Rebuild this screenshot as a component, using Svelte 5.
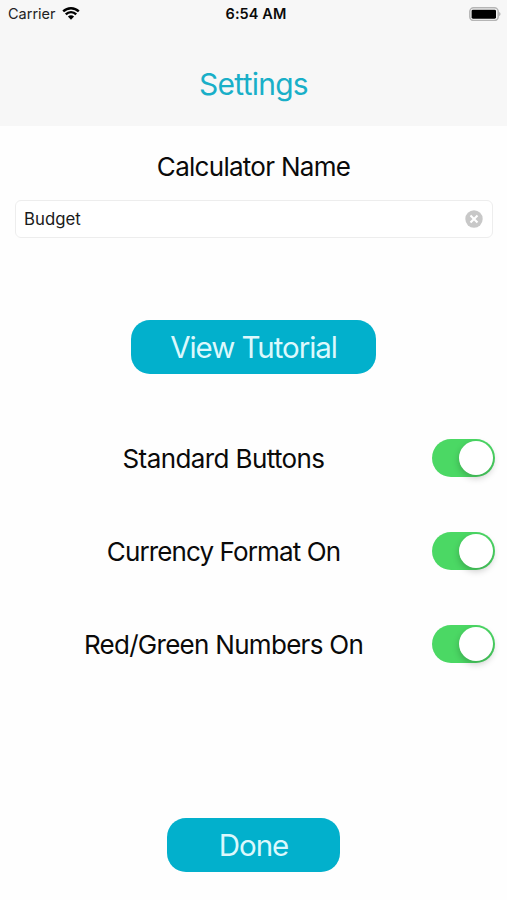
<script lang="ts">
  let calculatorName = $state("Budget");

  let options = $state([
    { id: "standard", label: "Standard Buttons", on: true },
    { id: "currency", label: "Currency Format On", on: true },
    { id: "colors", label: "Red/Green Numbers On", on: true },
  ]);
</script>

<div class="screen">
  <header class="navbar">
    <div class="statusbar">
      <div class="carrier">
        <span>Carrier</span>
        <svg class="wifi" viewBox="0 0 18 13" width="18" height="13" aria-hidden="true">
          <path d="M1.2 4.4a11.2 11.2 0 0 1 15.6 0" />
          <path d="M3.8 7.3a7.3 7.3 0 0 1 10.4 0" />
          <path class="dot" d="M5.9 9.6a4.5 4.5 0 0 1 6.2 0L9 12.7z" />
        </svg>
      </div>
      <span class="time">6:54 AM</span>
      <svg class="battery" viewBox="0 0 33 14" width="33" height="14" aria-hidden="true">
        <rect class="case" x="0.8" y="0.8" width="28.4" height="12.8" rx="3.8" />
        <rect x="2.6" y="2.7" width="24.4" height="9" rx="1.4" />
        <path class="cap" d="M30.3 5c1.5.6 1.5 3.6 0 4.2z" />
      </svg>
    </div>
    <h1>Settings</h1>
  </header>

  <main>
    <label class="name-label" for="calc-name">Calculator Name</label>
    <div class="field">
      <input id="calc-name" type="text" bind:value={calculatorName} />
      <button type="button" class="clear" aria-label="Clear" onclick={() => (calculatorName = "")}>
        <svg viewBox="0 0 18 18" width="18" height="18">
          <circle cx="9" cy="9" r="8.7" />
          <path d="M5.5 5.5l7 7M12.5 5.5l-7 7" />
        </svg>
      </button>
    </div>

    <button type="button" class="action tutorial">View Tutorial</button>

    <div class="options">
      {#each options as option (option.id)}
        <div class="option">
          <span class="option-label {option.id}">{option.label}</span>
          <button
            type="button"
            class="switch"
            class:on={option.on}
            role="switch"
            aria-checked={option.on}
            aria-label={option.label}
            onclick={() => (option.on = !option.on)}
          >
            <span class="knob"></span>
          </button>
        </div>
      {/each}
    </div>

    <button type="button" class="action done">Done</button>
  </main>
</div>

<style>
  :global(body) {
    margin: 0;
    background: #fff;
  }
  .screen {
    display: flex;
    flex-direction: column;
    height: 900px;
    overflow: hidden;
    background: #fefefe;
    color: #0a0a0a;
    font-family: Inter, "Liberation Sans", sans-serif;
  }
  button {
    padding: 0;
    border: none;
    font-family: inherit;
    cursor: pointer;
  }
  .navbar {
    height: 126px;
    background: #f7f7f7;
  }
  .statusbar {
    display: grid;
    grid-template-columns: 1fr auto 1fr;
    align-items: center;
    height: 27px;
    padding: 0 5px 0 8px;
    font-size: 14.5px;
  }
  .carrier {
    display: flex;
    align-items: center;
    gap: 6px;
    color: #222;
  }
  .wifi {
    fill: none;
    stroke: #000;
    stroke-width: 2.4;
  }
  .wifi .dot {
    fill: #000;
    stroke: none;
  }
  .time {
    padding-left: 2px;
    font-weight: 600;
    letter-spacing: 0.1px;
  }
  .battery {
    justify-self: end;
  }
  .battery .case {
    fill: none;
    stroke: #b5b5b5;
    stroke-width: 1.5;
  }
  .battery .cap {
    fill: #a0a0a0;
  }
  h1 {
    margin: 39px 0 0;
    font-size: 30px;
    font-weight: 400;
    line-height: 36px;
    letter-spacing: -0.75px;
    text-align: center;
    color: #19afc8;
  }
  main {
    display: flex;
    flex: 1;
    flex-direction: column;
    align-items: center;
  }
  .name-label {
    margin-top: 24px;
    font-size: 26px;
    line-height: 34px;
    letter-spacing: -0.72px;
  }
  .field {
    display: flex;
    align-items: center;
    align-self: stretch;
    box-sizing: border-box;
    height: 38px;
    margin: 16px 14px 0 15px;
    padding: 0 9px 0 8px;
    border: 1px solid #ededed;
    border-radius: 6px;
    background: #fff;
  }
  input {
    flex: 1;
    min-width: 0;
    padding: 0;
    border: none;
    outline: none;
    background: transparent;
    color: #1a1a1a;
    font-family: inherit;
    font-size: 16.8px;
  }
  .clear {
    display: flex;
    background: transparent;
  }
  .clear circle {
    fill: #c8c8c8;
  }
  .clear path {
    stroke: #fff;
    stroke-width: 2.1;
  }
  .action {
    height: 54px;
    border-radius: 19px;
    background: #02b0cc;
    color: #dcf8fc;
    font-size: 29.5px;
    font-weight: 400;
    letter-spacing: -1.05px;
  }
  .tutorial {
    width: 245px;
    margin-top: 82px;
  }
  .options {
    display: flex;
    flex-direction: column;
    align-self: stretch;
    gap: 55px;
    margin-top: 65px;
    padding: 0 12px 0 15px;
  }
  .option {
    display: flex;
    align-items: center;
    height: 38px;
  }
  .option-label {
    flex: 1;
    font-size: 26px;
    text-align: center;
  }
  .option-label.standard {
    letter-spacing: -0.6px;
  }
  .option-label.currency {
    letter-spacing: -0.88px;
  }
  .option-label.colors {
    letter-spacing: -0.71px;
  }
  .switch {
    width: 63px;
    height: 38px;
    border-radius: 19px;
    background: #e5e5e5;
  }
  .knob {
    display: block;
    width: 34px;
    height: 34px;
    margin-left: 2px;
    border-radius: 50%;
    background: #fff;
    box-shadow: 0 3px 7px rgba(0, 0, 0, 0.22);
    transition: margin-left 0.2s;
  }
  .switch.on {
    background: #4bd864;
  }
  .switch.on .knob {
    margin-left: 27px;
  }
  .done {
    width: 173px;
    margin-top: 155px;
  }
</style>
